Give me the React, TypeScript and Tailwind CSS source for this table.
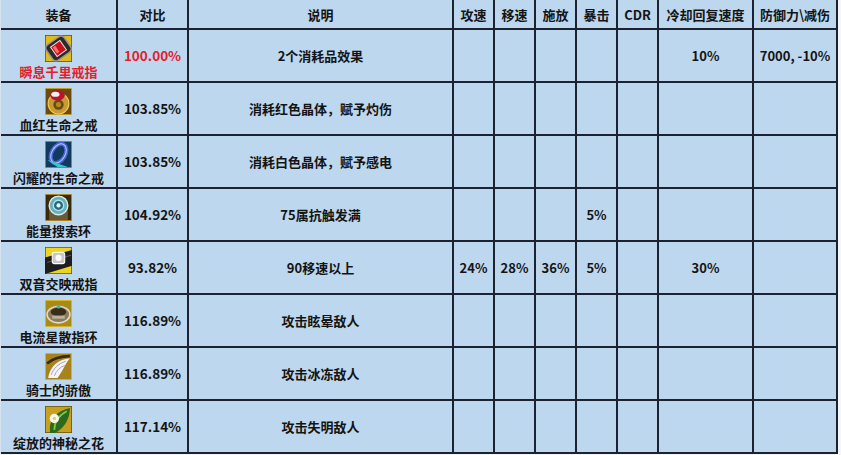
import React from "react";

type Row = {
  name: string;
  red?: boolean;
  ratio: string;
  desc: string;
  vals: string[];
  icon: number;
};

const rows: Row[] = [
  { name: "瞬息千里戒指", red: true, ratio: "100.00%", desc: "2个消耗品效果", vals: ["", "", "", "", "", "10%", "7000, -10%"], icon: 0 },
  { name: "血红生命之戒", ratio: "103.85%", desc: "消耗红色晶体，赋予灼伤", vals: ["", "", "", "", "", "", ""], icon: 1 },
  { name: "闪耀的生命之戒", ratio: "103.85%", desc: "消耗白色晶体，赋予感电", vals: ["", "", "", "", "", "", ""], icon: 2 },
  { name: "能量搜索环", ratio: "104.92%", desc: "75属抗触发满", vals: ["", "", "", "5%", "", "", ""], icon: 3 },
  { name: "双音交映戒指", ratio: "93.82%", desc: "90移速以上", vals: ["24%", "28%", "36%", "5%", "", "30%", ""], icon: 4 },
  { name: "电流星散指环", ratio: "116.89%", desc: "攻击眩晕敌人", vals: ["", "", "", "", "", "", ""], icon: 5 },
  { name: "骑士的骄傲", ratio: "116.89%", desc: "攻击冰冻敌人", vals: ["", "", "", "", "", "", ""], icon: 6 },
  { name: "绽放的神秘之花", ratio: "117.14%", desc: "攻击失明敌人", vals: ["", "", "", "", "", "", ""], icon: 7 },
];

const headers = ["装备", "对比", "说明", "攻速", "移速", "施放", "暴击", "CDR", "冷却回复速度", "防御力\\减伤"];

function Icon({ i }: { i: number }) {
  let body: React.ReactNode = null;
  if (i === 0) {
    body = (
      <>
        <rect x="0" y="0" width="26" height="26" fill="#e0bc1a" />
        <rect x="0" y="0" width="26" height="26" fill="none" stroke="#6a5408" strokeWidth="1.5" />
        <g transform="rotate(-35 13 13)">
          <rect x="2.5" y="4" width="21" height="18" rx="4" fill="#2e2a2a" stroke="#9a9490" strokeWidth="1.4" />
          <rect x="7.5" y="7.5" width="11" height="11" fill="#c8101a" stroke="#e8d8d8" strokeWidth="1" />
          <rect x="9" y="9" width="3" height="7" fill="#ff6a70" />
        </g>
      </>
    );
  } else if (i === 1) {
    body = (
      <>
        <rect x="0" y="0" width="26" height="26" fill="#6a4a12" />
        <rect x="0" y="0" width="26" height="26" fill="none" stroke="#d8b030" strokeWidth="1.5" />
        <circle cx="13" cy="15" r="10" fill="#c89a30" stroke="#f0d060" strokeWidth="1" />
        <circle cx="13" cy="16" r="5" fill="#6a4a14" />
        <circle cx="13" cy="16" r="2.5" fill="#b08a22" />
        <ellipse cx="12" cy="7" rx="7" ry="5" fill="#b8142a" />
        <ellipse cx="10" cy="6" rx="4" ry="2.5" fill="#f4f0f0" />
      </>
    );
  } else if (i === 2) {
    body = (
      <>
        <rect x="0" y="0" width="26" height="26" fill="#123a5a" />
        <rect x="0" y="0" width="26" height="26" fill="none" stroke="#c09a2a" strokeWidth="1.5" />
        <ellipse cx="13" cy="12" rx="6.5" ry="10" transform="rotate(30 13 12)" fill="none" stroke="#4a62d8" strokeWidth="4" />
        <ellipse cx="13" cy="12" rx="6.5" ry="10" transform="rotate(30 13 12)" fill="none" stroke="#b0c8ff" strokeWidth="1" />
        <path d="M2 18 L12 25 L22 25 Z" fill="#30c8d0" />
      </>
    );
  } else if (i === 3) {
    body = (
      <>
        <rect x="0" y="0" width="26" height="26" fill="#3a2a0a" />
        <rect x="0" y="0" width="26" height="26" fill="none" stroke="#c8a02a" strokeWidth="1.5" />
        <rect x="4" y="15" width="18" height="10" fill="#6a5a3a" />
        <circle cx="13" cy="11" r="9" fill="#6ab0b8" stroke="#d8eef0" strokeWidth="1.3" />
        <circle cx="13" cy="11" r="5" fill="#2a6a78" stroke="#a8e4f2" strokeWidth="1.3" />
        <circle cx="13" cy="11" r="2" fill="#e8faff" />
      </>
    );
  } else if (i === 4) {
    body = (
      <>
        <rect x="0" y="0" width="26" height="26" fill="#ecd422" />
        <rect x="0" y="0" width="26" height="26" fill="none" stroke="#6a5a08" strokeWidth="1.5" />
        <path d="M0 10 L26 3 L26 18 L0 26 Z" fill="#1e1e1e" />
        <path d="M2 15 L25 8" stroke="#5a5a5a" strokeWidth="1" />
        <rect x="7" y="5" width="12" height="11" rx="2" fill="#c8c8c8" stroke="#fff" strokeWidth="1" />
        <circle cx="13" cy="10.5" r="3" fill="#fafafa" />
      </>
    );
  } else if (i === 5) {
    body = (
      <>
        <rect x="0" y="0" width="26" height="26" fill="#a88a16" />
        <rect x="0" y="0" width="26" height="26" fill="none" stroke="#e0c030" strokeWidth="1.5" />
        <ellipse cx="13" cy="14" rx="11" ry="8" fill="#8a7a60" stroke="#e0d8c8" strokeWidth="1.5" />
        <ellipse cx="13" cy="11.5" rx="7.5" ry="4" fill="#3a2e18" />
        <rect x="7" y="15" width="12" height="3" fill="#bab298" />
        <circle cx="13" cy="6.5" r="1.8" fill="#30c0a0" />
      </>
    );
  } else if (i === 6) {
    body = (
      <>
        <rect x="0" y="0" width="26" height="26" fill="#a8821a" />
        <rect x="0" y="0" width="26" height="26" fill="none" stroke="#e0c030" strokeWidth="1.5" />
        <path d="M2 10 C8 5 15 3 24 3" stroke="#3a2a10" strokeWidth="2.5" fill="none" />
        <path d="M3 24 C5 13 12 6 24 5 C19 11 18 16 12 24 Z" fill="#f4f4f8" />
        <path d="M6 21 C8 15 13 10 20 8" stroke="#a0a0b0" strokeWidth="0.9" fill="none" />
        <path d="M9 22 C11 17 14 14 19 12" stroke="#a0a0b0" strokeWidth="0.9" fill="none" />
      </>
    );
  } else {
    body = (
      <>
        <rect x="0" y="0" width="26" height="26" fill="#c8a020" />
        <rect x="0" y="0" width="26" height="26" fill="none" stroke="#6a5408" strokeWidth="1.5" />
        <path d="M5 26 C3 14 10 5 24 2 C24 12 19 21 10 26 Z" fill="#2e6a1c" />
        <path d="M9 23 C9 15 13 9 21 5" stroke="#80c844" strokeWidth="1.6" fill="none" />
        <circle cx="9" cy="12" r="4.5" fill="#f6f6ea" />
        <circle cx="9" cy="12" r="1.6" fill="#e0d060" />
      </>
    );
  }
  return (
    <svg width="27" height="27" viewBox="0 0 26 26" className="block">
      {body}
    </svg>
  );
}

const cell =
  "border-r-2 border-b-2 border-[#1c2230] flex items-center justify-center text-center";

export default function App() {
  return (
    <div
      className="w-[841px] h-[455px] bg-[#f4f6f8] overflow-hidden text-[13px] font-bold text-[#141414] leading-none"
      style={{ fontFamily: '"Noto Sans CJK SC", "Noto Sans", sans-serif' }}
    >
      <div className="grid grid-cols-[117px_71px_265px_41px_41px_41px_41px_41px_95px_84px] grid-rows-[30px_repeat(8,53px)] w-[837px] bg-[#bdd7ee] border-l border-l-[#d6e2ee]">
        {headers.map((h) => (
          <div key={h} className={cell}>
            {h}
          </div>
        ))}
        {rows.map((r) => (
          <React.Fragment key={r.name}>
            <div className={`${cell} flex-col gap-[3px] pt-[1px]`}>
              <Icon i={r.icon} />
              <span className={r.red ? "text-[#e3202c]" : ""}>{r.name}</span>
            </div>
            <div className={`${cell} text-[13.5px] ${r.red ? "text-[#e3202c]" : ""}`}>{r.ratio}</div>
            <div className={cell}>{r.desc}</div>
            {r.vals.map((v, k) => (
              <div key={k} className={cell}>
                {v}
              </div>
            ))}
          </React.Fragment>
        ))}
      </div>
    </div>
  );
}
